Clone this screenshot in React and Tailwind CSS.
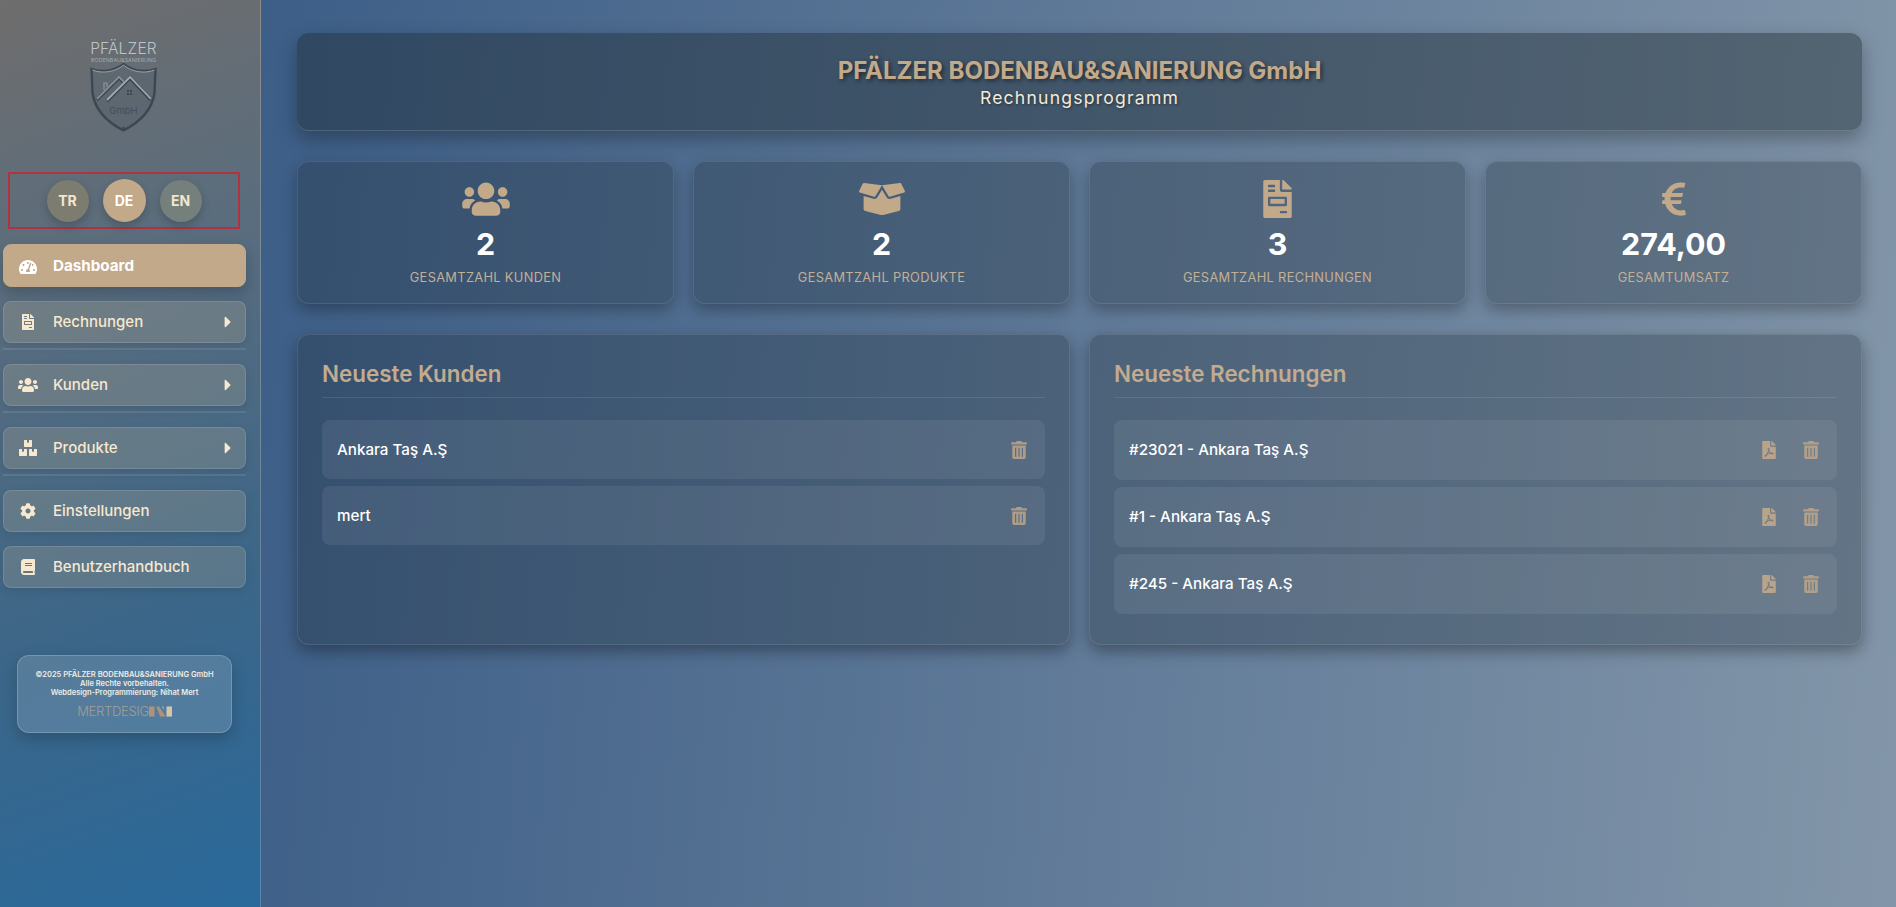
import {
  FaTachometerAlt,
  FaFileInvoice,
  FaUsers,
  FaBoxes,
  FaBoxOpen,
  FaCog,
  FaBook,
  FaCaretRight,
  FaEuroSign,
  FaTrashAlt,
  FaFilePdf
} from 'react-icons/fa'

const font = { fontFamily: 'Inter, "Noto Sans", sans-serif' }

function Logo() {
  return (
    <div className="w-[247px] flex flex-col items-center pt-[41px] h-[172px]">
      <div className="text-[15.5px] leading-[16px] font-light tracking-[0.2px] text-[#bcc3c9]">PFÄLZER</div>
      <div className="text-[5.4px] leading-[5px] mt-[1px] text-[#9fa9b1] whitespace-nowrap">BODENBAU&SANIERUNG</div>
      <svg width="67" height="69" viewBox="0 0 67 69">
        <path d="M1.5 6C12 10 25 8 33.5 1C42 8 55 10 65.5 6L64.5 30C62 48 48 60 33.5 67.5C19 60 5 48 2.5 30Z" fill="#4c5a66" fillOpacity="0.3" stroke="#3b4854" strokeWidth="2.4" />
        <path d="M2.5 7C12 11 25 9 33.5 2.2C42 9 55 11 64.5 7" fill="none" stroke="#a5afb6" strokeWidth="0.9" />
        <circle cx="33.5" cy="66" r="2" fill="#3b4854" />
        <path d="M7 37L29 15L35 21" fill="none" stroke="#3b4854" strokeWidth="3" />
        <path d="M7 36L29 14L35 20" fill="none" stroke="#8b969e" strokeWidth="1.6" />
        <path d="M17 38L40 15L61 37" fill="none" stroke="#3b4854" strokeWidth="3.4" />
        <path d="M17 37L40 14L61 36" fill="none" stroke="#a0aab1" strokeWidth="1.8" />
        <path d="M14 27V20H17V24" fill="none" stroke="#8b969e" strokeWidth="1.2" />
        <path d="M37 27H39V29H37ZM40 27H42V29H40ZM37 30H39V32H37ZM40 30H42V32H40Z" fill="#3b4854" />
        <text x="33.5" y="51" textAnchor="middle" fontSize="9.5" fontFamily="Inter, sans-serif" fill="#424f5a">GmbH</text>
      </svg>
    </div>
  )
}

function LangSwitch() {
  const langs = [
    { code: 'TR', cls: 'bg-[#7c7c70] text-[#f3e6cf]' },
    { code: 'DE', cls: 'bg-[#c2a98a] text-white w-[43px] h-[43px]' },
    { code: 'EN', cls: 'bg-[#757f7b] text-[#f3e6cf]' }
  ]
  return (
    <div className="mx-[8px] w-[232px] h-[57px] border-2 border-[#b3323f] flex items-center justify-center gap-[14px] mb-[15px]">
      {langs.map((l) => (
        <div
          key={l.code}
          className={`w-[42px] h-[42px] rounded-full flex items-center justify-center text-[14px] font-bold shadow-[0_4px_10px_rgba(0,0,0,0.2)] ${l.cls}`}
        >
          {l.code}
        </div>
      ))}
    </div>
  )
}

function NavItem({ icon: Icon, label, active, caret, iconWidth = 'w-[16px]' }) {
  return (
    <div
      className={`h-[42px] rounded-[8px] flex items-center relative pl-[14px] border ${
        active
          ? 'h-[43px] pt-[2px] text-[15.2px] bg-[#c2a98a] border-[#c2a98a] text-white font-bold shadow-[0_6px_14px_rgba(0,0,0,0.2)]'
          : 'text-[15px] bg-[rgba(194,180,150,0.22)] border-[rgba(255,255,255,0.12)] text-[#f7e8cf] font-medium shadow-[0_3px_8px_rgba(0,0,0,0.1)]'
      }`}
    >
      <span className="w-[20px] flex justify-center mr-[15px]">
        <Icon className={`${iconWidth} h-[16px] shrink-0`} />
      </span>
      {label}
      {caret && <FaCaretRight size={18} className="absolute right-[8px]" />}
    </div>
  )
}

function NavGroup({ icon, label, iconWidth }) {
  return (
    <div className="pb-[5px] border-b-2 border-[rgba(255,255,255,0.1)]">
      <NavItem icon={icon} label={label} iconWidth={iconWidth} caret />
    </div>
  )
}

function Sidebar() {
  return (
    <aside className="w-[261px] shrink-0 h-full border-r border-[rgba(255,255,255,0.2)] bg-[linear-gradient(160deg,#6f6d6d_0%,#5a6d7e_30%,#3d6688_65%,#29699b_100%)]">
      <Logo />
      <LangSwitch />
      <nav className="ml-[3px] w-[243px] flex flex-col gap-[14px]">
        <NavItem icon={FaTachometerAlt} label="Dashboard" iconWidth="w-[18px]" active />
        <NavGroup icon={FaFileInvoice} label="Rechnungen" />
        <NavGroup icon={FaUsers} label="Kunden" iconWidth="w-[20px]" />
        <NavGroup icon={FaBoxes} label="Produkte" iconWidth="w-[18px]" />
        <NavItem icon={FaCog} label="Einstellungen" />
        <NavItem icon={FaBook} label="Benutzerhandbuch" />
      </nav>
      <div className="ml-[17px] mt-[67px] w-[215px] h-[78px] rounded-[12px] border border-[rgba(255,255,255,0.2)] bg-[rgba(255,255,255,0.14)] shadow-[0_6px_16px_rgba(0,0,0,0.2)] pt-[14px] text-center text-[7.5px] leading-[9px] font-semibold text-[#f1ece2]">
        <div>©2025 PFÄLZER BODENBAU&SANIERUNG GmbH</div>
        <div>Alle Rechte vorbehalten.</div>
        <div>Webdesign-Programmierung: Nihat Mert</div>
        <div className="flex items-center justify-center mt-[8px] h-[12px]">
          <span className="text-[13px] leading-[12px] font-light text-[#a39f94] tracking-[-0.3px]">MERTDESIG</span>
          <svg width="23" height="11" viewBox="0 0 25 11">
            <path d="M0 0H6V11H0Z" fill="#b0917a" />
            <path d="M8 0H11L18 11H12Z" fill="#b0917a" />
            <path d="M14 0H16V4Z" fill="#c2a98a" />
            <path d="M19 0H25V11H19Z" fill="#d6c4a8" />
          </svg>
        </div>
      </div>
    </aside>
  )
}

function StatCard({ icon: Icon, iconWidth, value, label }) {
  return (
    <div className="h-[143px] rounded-[12px] border border-[rgba(255,255,255,0.1)] bg-[rgba(30,44,52,0.3)] shadow-[0_6px_16px_rgba(0,0,0,0.3)] flex flex-col items-center pt-[18px]">
      <Icon className={`${iconWidth} h-[38px] text-[#c2a98a]`} />
      <div className="text-[30.4px] leading-[39px] font-bold text-white mt-[7px]">{value}</div>
      <div className="text-[12.8px] leading-[16px] tracking-[0.35px] text-[#c2b096] uppercase mt-[6px]">{label}</div>
    </div>
  )
}

function ListRow({ text, pdf, rowHeight }) {
  return (
    <div className={`${rowHeight} rounded-[8px] bg-[rgba(255,255,255,0.07)] flex items-center pl-[15px] pr-[17px]`}>
      <span className="flex-1 text-[15.2px] font-medium text-white">{text}</span>
      {pdf && <FaFilePdf size={18} className="text-[#c2a98a] opacity-90 mr-[24px]" />}
      <FaTrashAlt size={18} className="text-[#c2a98a] opacity-80" />
    </div>
  )
}

function Panel({ title, children }) {
  return (
    <div className="h-[311px] rounded-[12px] border border-[rgba(255,255,255,0.1)] bg-[rgba(30,44,52,0.3)] shadow-[0_6px_16px_rgba(0,0,0,0.35)] px-[24px] pt-[24px]">
      <h2 className="text-[22.4px] leading-[29px] pb-[9px] font-semibold text-[#c2ab8f] border-b border-[rgba(255,255,255,0.1)] mb-[22px]">
        {title}
      </h2>
      <div className="flex flex-col gap-[7px]">{children}</div>
    </div>
  )
}

export default function App() {
  const stats = [
    { icon: FaUsers, iconWidth: 'w-[48px]', value: '2', label: 'Gesamtzahl Kunden' },
    { icon: FaBoxOpen, iconWidth: 'w-[46px]', value: '2', label: 'Gesamtzahl Produkte' },
    { icon: FaFileInvoice, iconWidth: 'w-[29px]', value: '3', label: 'Gesamtzahl Rechnungen' },
    { icon: FaEuroSign, iconWidth: 'w-[24px]', value: '274,00', label: 'Gesamtumsatz' }
  ]
  const customers = ['Ankara Taş A.Ş', 'mert']
  const invoices = ['#23021 - Ankara Taş A.Ş', '#1 - Ankara Taş A.Ş', '#245 - Ankara Taş A.Ş']

  return (
    <div style={font} className="flex h-screen overflow-hidden bg-[linear-gradient(95deg,#3a5c86_10%,#8396a9_100%)]">
      <Sidebar />
      <main className="flex-1 pl-[36px] pr-[34px] pt-[33px]">
        {/* Header */}
        <div className="h-[98px] rounded-[12px] border-b border-[rgba(255,255,255,0.15)] bg-[rgba(30,44,52,0.45)] shadow-[0_8px_20px_rgba(0,0,0,0.3)] flex flex-col items-center pt-[23px]">
          <h1 className="text-[24px] leading-[30px] font-bold text-[#c2a98a] [text-shadow:2px_2px_4px_rgba(0,0,0,0.5)]">
            PFÄLZER BODENBAU&SANIERUNG GmbH
          </h1>
          <p className="text-[17.6px] leading-[24px] tracking-[1.2px] text-[#f3ead9] [text-shadow:1px_1px_3px_rgba(0,0,0,0.5)]">
            Rechnungsprogramm
          </p>
        </div>

        {/* Stats Cards */}
        <div className="grid grid-cols-4 gap-[19px] mt-[30px]">
          {stats.map((s) => (
            <StatCard key={s.label} icon={s.icon} iconWidth={s.iconWidth} value={s.value} label={s.label} />
          ))}
        </div>

        {/* Lists */}
        <div className="grid grid-cols-2 gap-[19px] mt-[30px]">
          <Panel title="Neueste Kunden">
            {customers.map((c) => (
              <ListRow key={c} text={c} rowHeight="h-[59px] pt-[1px]" />
            ))}
          </Panel>
          <Panel title="Neueste Rechnungen">
            {invoices.map((i) => (
              <ListRow key={i} text={i} pdf rowHeight="h-[60px]" />
            ))}
          </Panel>
        </div>
      </main>
    </div>
  )
}
